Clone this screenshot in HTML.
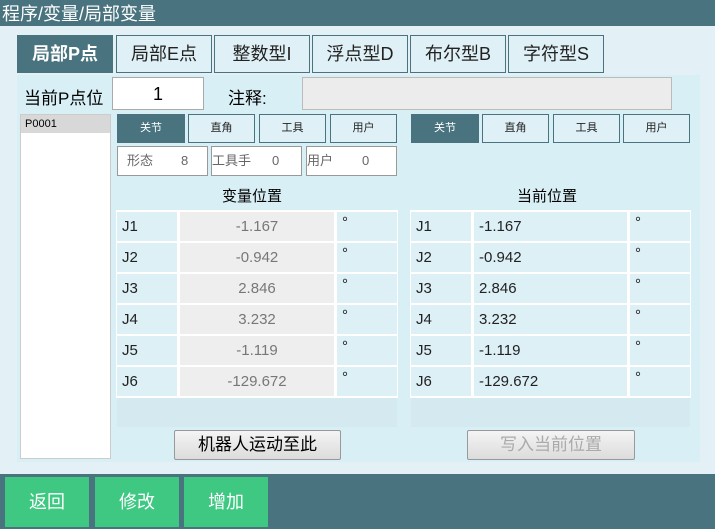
<html><head><style>
*{margin:0;padding:0;box-sizing:border-box}
body{width:715px;height:529px;position:relative;background:#e3f1f6;font-family:"Liberation Sans","Noto Sans CJK SC",sans-serif;overflow:hidden}
.a{position:absolute}
.hdr{left:0;top:0;width:715px;height:26px;background:#48737f;color:#fff;font-size:18px;line-height:28px;padding-left:2px}
.tab{top:35px;height:38px;border:1px solid #48737f;background:#dff0f6;color:#222;font-size:18px;text-align:center;line-height:36px}
.panel{left:17px;top:75px;width:683px;height:387px;background:#d9eff6}
.st{top:114px;height:29px;border:1px solid #48737f;background:#dff0f6;font-size:11px;text-align:center;line-height:27px;color:#222}
.st.on{background:#48737f;color:#fff}
.ib{top:146px;height:30px;background:#fff;border:1px solid #999;font-size:13px;line-height:28px;color:#666}
.c{height:29px;line-height:30px;font-size:15px;background:#dcf0f6;padding-left:5px;color:#222}
.g{background:#eeeeee;color:#777;text-align:center;padding:0}
.bot{left:0;top:474px;width:715px;height:55px;background:#48737f}
.gb{top:477px;width:84px;height:50px;background:#3ec882;color:#fff;font-size:18px;text-align:center;line-height:50px}
.btn{top:430px;height:30px;border:1px solid #999;border-radius:2px;background:linear-gradient(#f4f4f4,#dcdcdc);font-size:17px;text-align:center;line-height:28px}
</style></head><body>
<div class="a hdr">程序/变量/局部变量</div>
<div class="a panel"></div>
<div class="a tab" style="left:17px;width:96px;background:#48737f;color:#fff;font-weight:bold">局部P点</div>
<div class="a tab" style="left:116px;width:96px">局部E点</div>
<div class="a tab" style="left:214px;width:96px">整数型I</div>
<div class="a tab" style="left:312px;width:96px">浮点型D</div>
<div class="a tab" style="left:410px;width:96px">布尔型B</div>
<div class="a tab" style="left:508px;width:96px">字符型S</div>
<div class="a" style="left:24px;top:84px;font-size:17px">当前P点位</div>
<div class="a" style="left:112px;top:77px;width:92px;height:33px;background:#fff;border:1px solid #aaa;text-align:center;font-size:18px;line-height:32px">1</div>
<div class="a" style="left:228px;top:84px;font-size:17px">注释:</div>
<div class="a" style="left:302px;top:77px;width:370px;height:33px;background:#ececec;border:1px solid #bbb"></div>
<div class="a" style="left:20px;top:114px;width:91px;height:345px;background:#fff;border:1px solid #ccc"><div style="background:#d8d8d8;height:18px;font-size:11px;padding-left:4px;line-height:18px">P0001</div></div>
<div class="a st on" style="left:117px;width:68px">关节</div>
<div class="a st" style="left:188px;width:67px">直角</div>
<div class="a st" style="left:259px;width:67px">工具</div>
<div class="a st" style="left:330px;width:67px">用户</div>
<div class="a st on" style="left:411px;width:68px">关节</div>
<div class="a st" style="left:482px;width:67px">直角</div>
<div class="a st" style="left:553px;width:67px">工具</div>
<div class="a st" style="left:623px;width:67px">用户</div>
<div class="a ib" style="left:117px;width:91px;padding-left:9px">形态<span style="position:absolute;left:63px">8</span></div>
<div class="a ib" style="left:211px;width:91px">工具手<span style="position:absolute;left:60px">0</span></div>
<div class="a ib" style="left:306px;width:91px">用户<span style="position:absolute;left:55px">0</span></div>
<div class="a" style="left:222px;top:185px;font-size:15px">变量位置</div>
<div class="a" style="left:517px;top:185px;font-size:15px">当前位置</div>
<div class="a" style="left:116px;top:210px;width:282px;height:188px;background:#fff"></div>
<div class="a" style="left:410px;top:210px;width:281px;height:188px;background:#fff"></div>
<div class="a" style="left:117px;top:398px;width:280px;height:29px;background:#d4e9f0"></div>
<div class="a" style="left:411px;top:398px;width:279px;height:29px;background:#d4e9f0"></div>
<div id="t"></div>
<script>
var v=["-1.167","-0.942","2.846","3.232","-1.119","-129.672"],h="";
for(var i=0;i<6;i++){var y=212+i*31;
h+='<div class="a c" style="left:117px;top:'+y+'px;width:60px">J'+(i+1)+'</div>';
h+='<div class="a c g" style="left:180px;top:'+y+'px;width:154px">'+v[i]+'</div>';
h+='<div class="a c" style="left:337px;top:'+y+'px;width:60px;line-height:22px">°</div>';
h+='<div class="a c" style="left:411px;top:'+y+'px;width:60px">J'+(i+1)+'</div>';
h+='<div class="a c" style="left:474px;top:'+y+'px;width:153px;padding-left:5px">'+v[i]+'</div>';
h+='<div class="a c" style="left:630px;top:'+y+'px;width:60px;line-height:22px">°</div>';}
document.getElementById("t").innerHTML=h;
</script>
<div class="a btn" style="left:174px;width:167px">机器人运动至此</div>
<div class="a btn" style="left:467px;width:168px;color:#aaa">写入当前位置</div>
<div class="a bot"></div>
<div class="a gb" style="left:5px">返回</div>
<div class="a gb" style="left:95px">修改</div>
<div class="a gb" style="left:184px">增加</div>
</body></html>
